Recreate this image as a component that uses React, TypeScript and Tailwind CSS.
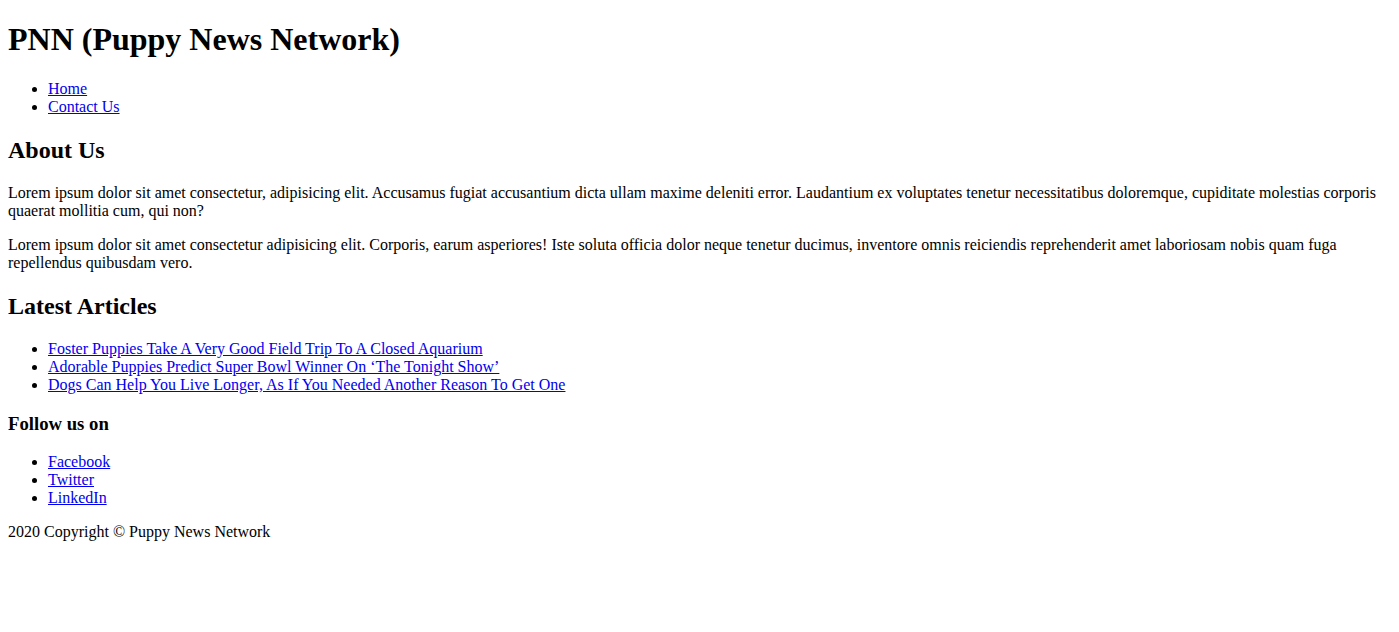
const NAV = ['Home', 'Contact Us'];

const ARTICLES = [
  'Foster Puppies Take A Very Good Field Trip To A Closed Aquarium',
  'Adorable Puppies Predict Super Bowl Winner On \u2018The Tonight Show\u2019',
  'Dogs Can Help You Live Longer, As If You Needed Another Reason To Get One',
];

const SOCIAL = ['Facebook', 'Twitter', 'LinkedIn'];

function LinkList({ items, className }: { items: string[]; className: string }) {
  return (
    <ul className={`list-disc pl-10 ${className}`}>
      {items.map((item) => (
        <li key={item}>
          <a href="#" className="text-[#0000ee] underline">
            {item}
          </a>
        </li>
      ))}
    </ul>
  );
}

export default function App() {
  return (
    <div className="bg-white text-black font-['Liberation_Serif','Times_New_Roman',serif] text-base leading-[normal] mx-2">
      {/* Header */}
      <header>
        <h1 className="text-[2em] font-bold my-[0.67em]">PNN (Puppy News Network)</h1>
        <nav>
          <LinkList items={NAV} className="my-4" />
        </nav>
      </header>

      <main>
        <section>
          <h2 className="text-[1.5em] font-bold mt-[21px] mb-[0.83em]">About Us</h2>
          <p className="my-4">
            Lorem ipsum dolor sit amet consectetur, adipisicing elit. Accusamus fugiat accusantium dicta ullam maxime
            deleniti error. Laudantium ex voluptates tenetur necessitatibus doloremque, cupiditate molestias corporis
            quaerat mollitia cum, qui non?
          </p>
          <p className="my-4">
            Lorem ipsum dolor sit amet consectetur adipisicing elit. Corporis, earum asperiores! Iste soluta officia
            dolor neque tenetur ducimus, inventore omnis reiciendis reprehenderit amet laboriosam nobis quam fuga
            repellendus quibusdam vero.
          </p>
        </section>

        <section>
          <h2 className="text-[1.5em] font-bold mt-[21px] mb-[0.83em]">Latest Articles</h2>
          <LinkList items={ARTICLES} className="my-4" />
        </section>
      </main>

      <footer>
        <h3 className="text-[1.17em] font-bold mt-[19px] mb-[18px]">Follow us on</h3>
        <LinkList items={SOCIAL} className="my-4" />
        <p className="my-4">2020 Copyright © Puppy News Network</p>
      </footer>
    </div>
  );
}
